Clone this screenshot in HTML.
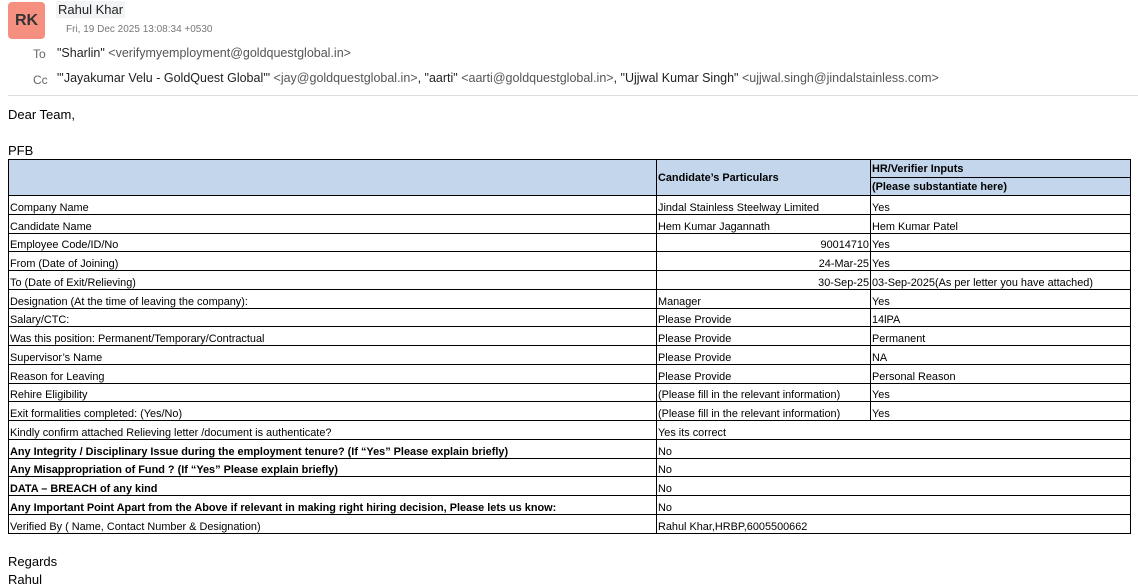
<!DOCTYPE html>
<html><head><meta charset="utf-8"><style>
body{margin:0;width:1138px;height:588px;background:#fff;font-family:"Liberation Sans",sans-serif;color:#222;position:relative;overflow:hidden}
.a{position:absolute}
.av{left:8px;top:2px;width:37px;height:37px;background:#f59080;border-radius:4px;color:#333;font-size:16px;font-weight:bold;text-align:center;line-height:37px}
table{position:absolute;left:8px;top:159px;width:1122px;border-collapse:collapse;table-layout:fixed;font-size:10.9px;color:#000}
td{border:1px solid #000;padding:0 1px;height:17.75px;white-space:nowrap;overflow:hidden;line-height:12px;vertical-align:bottom}
th{border:1px solid #000;background:#c3d6ec;text-align:left;padding:0 1px;font-size:10.9px;height:17px}
.r{text-align:right}
.b{font-weight:bold}
.g{color:#555}
</style></head><body>
<div class="a av">RK</div>
<div class="a" style="left:56px;top:1px;background:#f3f4f5;padding:1px 2px;font-size:13px;color:#222">Rahul Khar</div>
<div class="a" style="left:66px;top:24px;font-size:10px;color:#777">Fri, 19 Dec 2025 13:08:34 +0530</div>
<div class="a" style="left:33px;top:47px;font-size:12px;color:#666">To</div>
<div class="a" style="left:57px;top:46px;font-size:12.5px"><span>"Sharlin"</span> <span class="g">&lt;verifymyemployment@goldquestglobal.in&gt;</span></div>
<div class="a" style="left:33px;top:73px;font-size:12px;color:#666">Cc</div>
<div class="a" style="left:57px;top:71px;font-size:12.5px;white-space:nowrap">"'Jayakumar Velu - GoldQuest Global'" <span class="g">&lt;jay@goldquestglobal.in&gt;</span>, "aarti" <span class="g">&lt;aarti@goldquestglobal.in&gt;</span>, "Ujjwal Kumar Singh" <span class="g">&lt;ujjwal.singh@jindalstainless.com&gt;</span></div>
<div class="a" style="left:8px;top:95px;width:1130px;height:1px;background:#ddd"></div>
<div class="a" style="left:8px;top:107px;font-size:13px;color:#000">Dear Team,</div>
<div class="a" style="left:8px;top:143px;font-size:13px;color:#000">PFB</div>
<table>
<colgroup><col style="width:648px"><col style="width:214px"><col style="width:260px"></colgroup>
<tr><th rowspan="2"></th><th rowspan="2">Candidate’s Particulars</th><th>HR/Verifier Inputs</th></tr>
<tr><th>(Please substantiate here)</th></tr>
<tr><td>Company Name</td><td>Jindal Stainless Steelway Limited</td><td>Yes</td></tr>
<tr><td>Candidate Name</td><td>Hem Kumar Jagannath</td><td>Hem Kumar Patel</td></tr>
<tr><td>Employee Code/ID/No</td><td class="r">90014710</td><td>Yes</td></tr>
<tr><td>From (Date of Joining)</td><td class="r">24-Mar-25</td><td>Yes</td></tr>
<tr><td>To (Date of Exit/Relieving)</td><td class="r">30-Sep-25</td><td>03-Sep-2025(As per letter you have attached)</td></tr>
<tr><td>Designation (At the time of leaving the company):</td><td>Manager</td><td>Yes</td></tr>
<tr><td>Salary/CTC:</td><td>Please Provide</td><td>14lPA</td></tr>
<tr><td>Was this position: Permanent/Temporary/Contractual</td><td>Please Provide</td><td>Permanent</td></tr>
<tr><td>Supervisor’s Name</td><td>Please Provide</td><td>NA</td></tr>
<tr><td>Reason for Leaving</td><td>Please Provide</td><td>Personal Reason</td></tr>
<tr><td>Rehire Eligibility</td><td>(Please fill in the relevant information)</td><td>Yes</td></tr>
<tr><td>Exit formalities completed: (Yes/No)</td><td>(Please fill in the relevant information)</td><td>Yes</td></tr>
<tr><td>Kindly confirm attached Relieving letter /document is authenticate?</td><td colspan="2">Yes its correct</td></tr>
<tr><td class="b">Any Integrity / Disciplinary Issue during the employment tenure? (If “Yes” Please explain briefly)</td><td colspan="2">No</td></tr>
<tr><td class="b">Any Misappropriation of Fund ? (If “Yes” Please explain briefly)</td><td colspan="2">No</td></tr>
<tr><td class="b">DATA – BREACH of any kind</td><td colspan="2">No</td></tr>
<tr><td class="b">Any Important Point Apart from the Above if relevant in making right hiring decision, Please lets us know:</td><td colspan="2">No</td></tr>
<tr><td>Verified By ( Name, Contact Number &amp; Designation)</td><td colspan="2">Rahul Khar,HRBP,6005500662</td></tr>
</table>
<div class="a" style="left:8px;top:554px;font-size:13px;color:#000">Regards</div>
<div class="a" style="left:8px;top:572px;font-size:13px;color:#000">Rahul</div>
</body></html>
